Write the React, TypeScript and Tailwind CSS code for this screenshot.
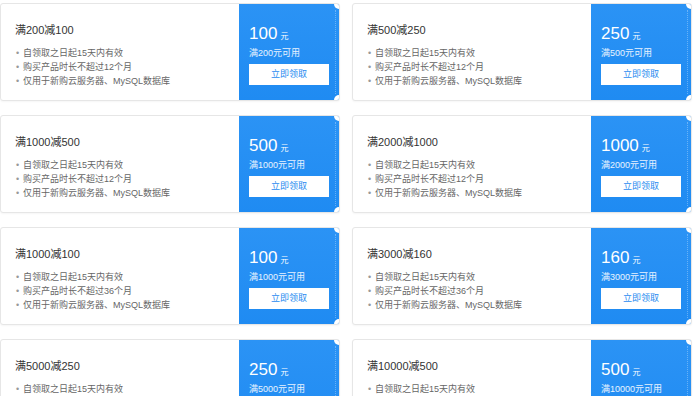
import React from "react";

type Coupon = { title: string; amount: string; cond: string; months: number };

const coupons: Coupon[] = [
  { title: "满200减100", amount: "100", cond: "满200元可用", months: 12 },
  { title: "满500减250", amount: "250", cond: "满500元可用", months: 12 },
  { title: "满1000减500", amount: "500", cond: "满1000元可用", months: 12 },
  { title: "满2000减1000", amount: "1000", cond: "满2000元可用", months: 12 },
  { title: "满1000减100", amount: "100", cond: "满1000元可用", months: 36 },
  { title: "满3000减160", amount: "160", cond: "满3000元可用", months: 36 },
  { title: "满5000减250", amount: "250", cond: "满5000元可用", months: 36 },
  { title: "满10000减500", amount: "500", cond: "满10000元可用", months: 36 },
];

function Card({ c }: { c: Coupon }) {
  const bullets = [
    "自领取之日起15天内有效",
    `购买产品时长不超过${c.months}个月`,
    "仅用于新购云服务器、MySQL数据库",
  ];
  return (
    <div className="flex h-[98px] w-[340px] overflow-hidden rounded-[3px] border border-[#e6e6e6] bg-white shadow-[0_1px_2px_rgba(0,0,0,0.04)]">
      <div className="flex-1 pl-[14px] pt-[19px]">
        <div className="mb-[9px] text-[11px] leading-[14px] text-[#333]">{c.title}</div>
        {bullets.map((b) => (
          <div key={b} className="flex text-[9px] leading-[14px] text-[#666]">
            <span className="w-[8px] pl-[1px] text-[#999]">•</span>
            <span>{b}</span>
          </div>
        ))}
      </div>
      <div className="relative w-[100px] shrink-0 bg-gradient-to-b from-[#2b93f5] to-[#1f8bf2] px-[10px] pt-[20px] text-white">
        <div className="flex items-baseline leading-[20px]">
          <span className="text-[17px] font-light">{c.amount}</span>
          <span className="ml-[3px] text-[8px]">元</span>
        </div>
        <div className="text-[9px] leading-[12px] text-white/90">{c.cond}</div>
        <div className="mt-[5px] flex h-[21px] w-[80px] items-center justify-center bg-white text-[9px] text-[#2a8cf0]">
          立即领取
        </div>
        <div className="absolute right-[3px] top-[6px] bottom-[6px] border-r border-dotted border-white/30" />
        <div className="absolute -right-[5px] -top-[5px] h-[10px] w-[10px] rounded-full bg-white" />
        <div className="absolute -right-[5px] -bottom-[5px] h-[10px] w-[10px] rounded-full bg-white" />
      </div>
    </div>
  );
}

export default function App() {
  return (
    <div
      className="h-[396px] w-[700px] overflow-hidden bg-white pt-[3px]"
      style={{ fontFamily: '"Liberation Sans", "Noto Sans CJK SC", sans-serif' }}
    >
      <div className="grid grid-cols-[340px_340px] gap-x-[12px] gap-y-[14px]">
        {coupons.map((c) => (
          <Card key={c.title} c={c} />
        ))}
      </div>
    </div>
  );
}
